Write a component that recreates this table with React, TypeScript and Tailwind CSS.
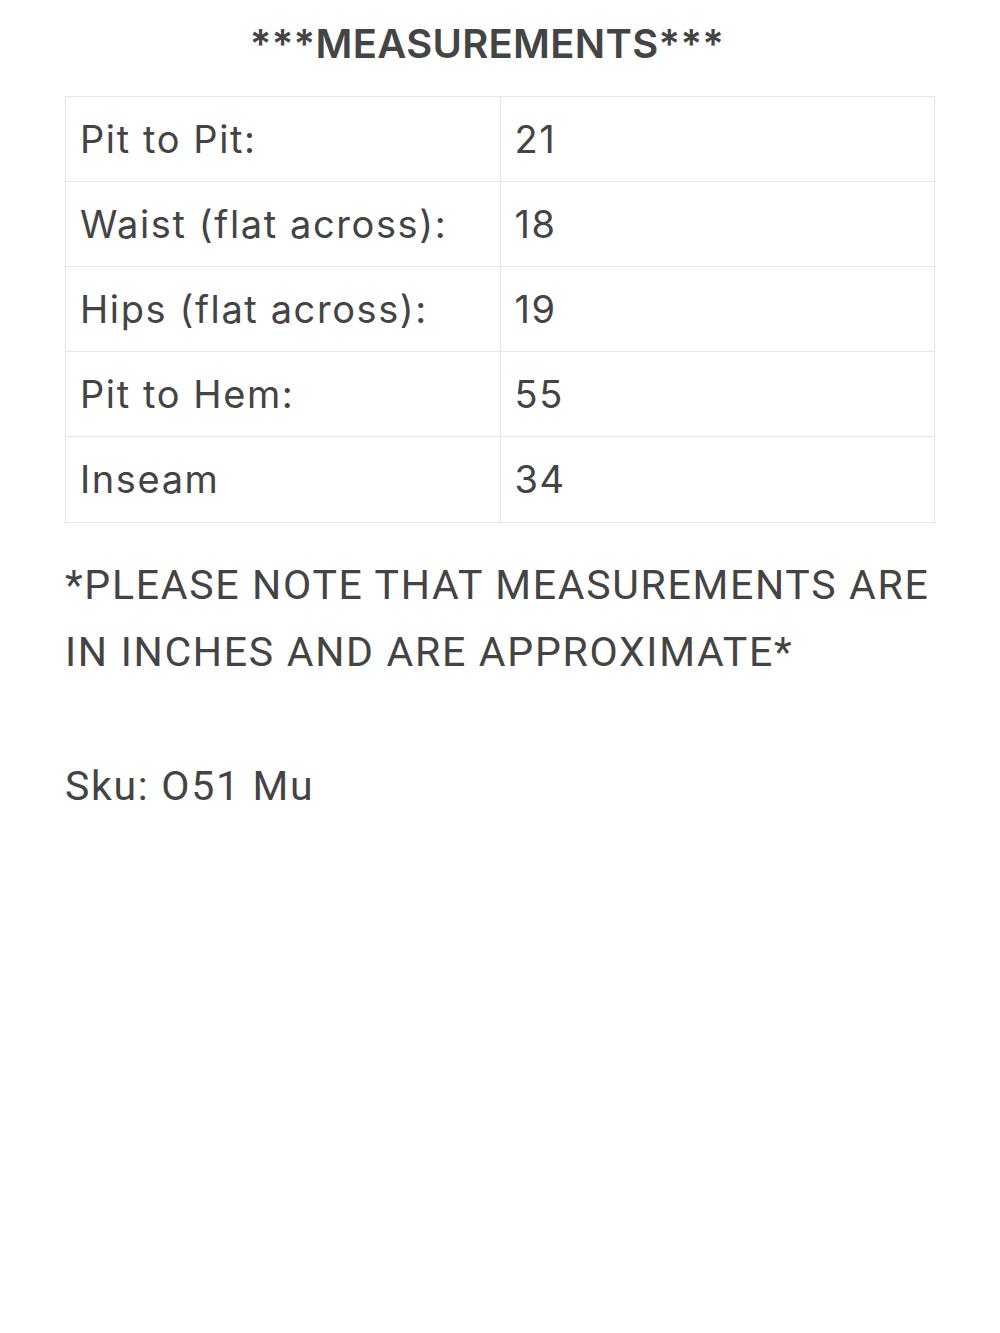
import React from 'react';

const rows: [string, string][] = [
    ['Pit to Pit:', '21'],
    ['Waist (flat across):', '18'],
    ['Hips (flat across):', '19'],
    ['Pit to Hem:', '55'],
    ['Inseam', '34'],
];

export default function App() {
    return (
        <div className="min-h-[1333px] w-[1000px] bg-white text-[#444444] font-['Inter',sans-serif]">
            <div className="px-[65px] pt-[18px]">
                <h1 className="pr-[26px] text-center text-[40px] font-semibold leading-[52px] tracking-[0.3px]">
                    ***MEASUREMENTS***
                </h1>
                <table className="mt-[26px] w-full border-collapse border border-[#e6e6e6] text-[38px] leading-[48px] tracking-[1.6px]">
                    <tbody>
                        {rows.map(([label, value], i) => (
                            <tr key={label}>
                                <td className={`w-1/2 border border-[#e6e6e6] px-[14px] ${i === rows.length - 1 ? 'pt-[18px] pb-[19px]' : 'py-[18px]'}`}>{label}</td>
                                <td className={`w-1/2 border border-[#e6e6e6] px-[14px] ${i === rows.length - 1 ? 'pt-[18px] pb-[19px]' : 'py-[18px]'}`}>{value}</td>
                            </tr>
                        ))}
                    </tbody>
                </table>
                <div className="mt-[29px] font-['Roboto',sans-serif] text-[41px] leading-[67px] tracking-[1.7px]">
                    <p>*PLEASE NOTE THAT MEASUREMENTS ARE IN INCHES AND ARE APPROXIMATE*</p>
                    <p className="mt-[67px]">Sku: O51 Mu</p>
                </div>
            </div>
        </div>
    );
}
